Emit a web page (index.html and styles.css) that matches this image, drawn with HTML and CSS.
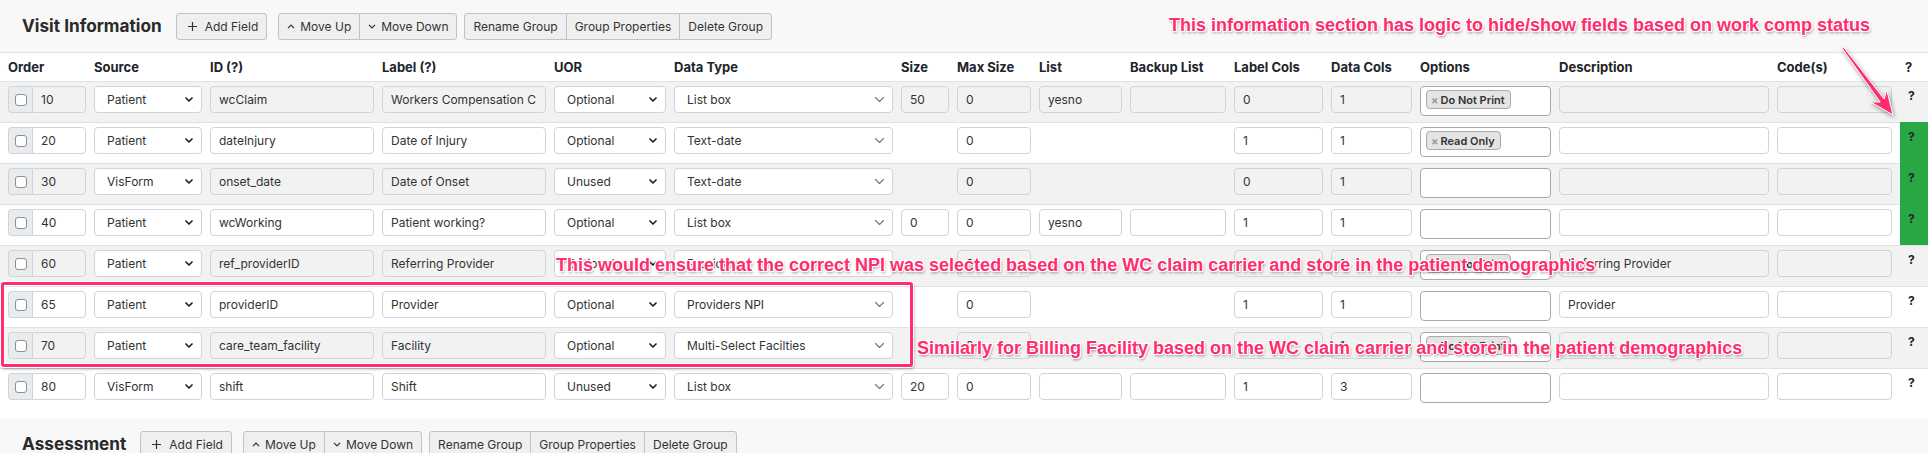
FILE: index.html
```html
<!DOCTYPE html>
<html lang="en">
<head>
<meta charset="utf-8">
<title>Layout Editor</title>
<link rel="stylesheet" href="styles.css">
</head>
<body>
<section class="group">
  <div class="group-head">
    <h2 class="group-title">Visit Information</h2>
    <button class="btn add"><svg class="ico" width="9" height="9" viewBox="0 0 9 9"><path d="M4.5 0v9M0 4.5h9" stroke="#333" stroke-width="1.2" fill="none"/></svg>Add Field</button>
    <div class="btn-group g1">
      <button class="btn"><svg class="ico" width="8" height="5" viewBox="0 0 8 5"><path d="M1 4.2l3-3 3 3" stroke="#333" stroke-width="1.2" fill="none"/></svg>Move Up</button>
      <button class="btn"><svg class="ico" width="8" height="5" viewBox="0 0 8 5"><path d="M1 .8l3 3 3-3" stroke="#333" stroke-width="1.2" fill="none"/></svg>Move Down</button>
    </div>
    <div class="btn-group g2">
      <button class="btn">Rename Group</button>
      <button class="btn">Group Properties</button>
      <button class="btn">Delete Group</button>
    </div>
  </div>
  <table class="fields">
    <colgroup>
      <col style="width:94px"><col style="width:116px"><col style="width:172px"><col style="width:172px"><col style="width:120px"><col style="width:227px"><col style="width:56px"><col style="width:82px"><col style="width:91px"><col style="width:104px"><col style="width:97px"><col style="width:89px"><col style="width:139px"><col style="width:218px"><col style="width:123px"><col style="width:28px">
    </colgroup>
    <thead>
      <tr><th>Order</th><th>Source</th><th>ID (?)</th><th>Label (?)</th><th>UOR</th><th>Data Type</th><th>Size</th><th>Max Size</th><th>List</th><th>Backup List</th><th>Label Cols</th><th>Data Cols</th><th>Options</th><th>Description</th><th>Code(s)</th><th>?</th></tr>
    </thead>
    <tbody>
      <tr class="odd">
        <td><div class="ord"><span class="chk"><input type="checkbox" class="cb"></span><input class="inp ro" value="10" readonly></div></td>
        <td><div class="sel"><span>Patient</span><svg class="chev" width="8" height="5" viewBox="0 0 8 5"><path d="M1 1l3 3 3-3"/></svg></div></td>
        <td><input class="inp ro" value="wcClaim" readonly></td>
        <td><input class="inp ro" value="Workers Compensation C" readonly></td>
        <td><div class="sel"><span>Optional</span><svg class="chev" width="8" height="5" viewBox="0 0 8 5"><path d="M1 1l3 3 3-3"/></svg></div></td>
        <td><div class="sel"><span>List box</span><svg class="chev thin" width="9" height="5" viewBox="0 0 9 5"><path d="M.5.5l4 4 4-4"/></svg></div></td>
        <td><input class="inp ro" value="50" readonly></td>
        <td><input class="inp ro" value="0" readonly></td>
        <td><input class="inp ro" value="yesno" readonly></td>
        <td><input class="inp ro" value="" readonly></td>
        <td><input class="inp ro" value="0" readonly></td>
        <td><input class="inp ro" value="1" readonly></td>
        <td><div class="opts"><span class="tag"><span class="x">×</span>Do Not Print</span></div></td>
        <td><input class="inp ro" value="" readonly></td>
        <td><input class="inp ro" value="" readonly></td>
        <td class="q">?</td>
      </tr>
      <tr>
        <td><div class="ord"><span class="chk"><input type="checkbox" class="cb"></span><input class="inp" value="20"></div></td>
        <td><div class="sel"><span>Patient</span><svg class="chev" width="8" height="5" viewBox="0 0 8 5"><path d="M1 1l3 3 3-3"/></svg></div></td>
        <td><input class="inp" value="dateInjury"></td>
        <td><input class="inp" value="Date of Injury"></td>
        <td><div class="sel"><span>Optional</span><svg class="chev" width="8" height="5" viewBox="0 0 8 5"><path d="M1 1l3 3 3-3"/></svg></div></td>
        <td><div class="sel"><span>Text-date</span><svg class="chev thin" width="9" height="5" viewBox="0 0 9 5"><path d="M.5.5l4 4 4-4"/></svg></div></td>
        <td></td>
        <td><input class="inp" value="0"></td>
        <td></td>
        <td></td>
        <td><input class="inp" value="1"></td>
        <td><input class="inp" value="1"></td>
        <td><div class="opts"><span class="tag"><span class="x">×</span>Read Only</span></div></td>
        <td><input class="inp" value=""></td>
        <td><input class="inp" value=""></td>
        <td class="q ok">?</td>
      </tr>
      <tr class="odd">
        <td><div class="ord"><span class="chk"><input type="checkbox" class="cb"></span><input class="inp ro" value="30" readonly></div></td>
        <td><div class="sel"><span>VisForm</span><svg class="chev" width="8" height="5" viewBox="0 0 8 5"><path d="M1 1l3 3 3-3"/></svg></div></td>
        <td><input class="inp ro" value="onset_date" readonly></td>
        <td><input class="inp ro" value="Date of Onset" readonly></td>
        <td><div class="sel"><span>Unused</span><svg class="chev" width="8" height="5" viewBox="0 0 8 5"><path d="M1 1l3 3 3-3"/></svg></div></td>
        <td><div class="sel"><span>Text-date</span><svg class="chev thin" width="9" height="5" viewBox="0 0 9 5"><path d="M.5.5l4 4 4-4"/></svg></div></td>
        <td></td>
        <td><input class="inp ro" value="0" readonly></td>
        <td></td>
        <td></td>
        <td><input class="inp ro" value="0" readonly></td>
        <td><input class="inp ro" value="1" readonly></td>
        <td><div class="opts"></div></td>
        <td><input class="inp ro" value="" readonly></td>
        <td><input class="inp ro" value="" readonly></td>
        <td class="q ok">?</td>
      </tr>
      <tr>
        <td><div class="ord"><span class="chk"><input type="checkbox" class="cb"></span><input class="inp" value="40"></div></td>
        <td><div class="sel"><span>Patient</span><svg class="chev" width="8" height="5" viewBox="0 0 8 5"><path d="M1 1l3 3 3-3"/></svg></div></td>
        <td><input class="inp" value="wcWorking"></td>
        <td><input class="inp" value="Patient working?"></td>
        <td><div class="sel"><span>Optional</span><svg class="chev" width="8" height="5" viewBox="0 0 8 5"><path d="M1 1l3 3 3-3"/></svg></div></td>
        <td><div class="sel"><span>List box</span><svg class="chev thin" width="9" height="5" viewBox="0 0 9 5"><path d="M.5.5l4 4 4-4"/></svg></div></td>
        <td><input class="inp" value="0"></td>
        <td><input class="inp" value="0"></td>
        <td><input class="inp" value="yesno"></td>
        <td><input class="inp" value=""></td>
        <td><input class="inp" value="1"></td>
        <td><input class="inp" value="1"></td>
        <td><div class="opts"></div></td>
        <td><input class="inp" value=""></td>
        <td><input class="inp" value=""></td>
        <td class="q ok">?</td>
      </tr>
      <tr class="odd">
        <td><div class="ord"><span class="chk"><input type="checkbox" class="cb"></span><input class="inp ro" value="60" readonly></div></td>
        <td><div class="sel"><span>Patient</span><svg class="chev" width="8" height="5" viewBox="0 0 8 5"><path d="M1 1l3 3 3-3"/></svg></div></td>
        <td><input class="inp ro" value="ref_providerID" readonly></td>
        <td><input class="inp ro" value="Referring Provider" readonly></td>
        <td><div class="sel"><span>Optional</span><svg class="chev" width="8" height="5" viewBox="0 0 8 5"><path d="M1 1l3 3 3-3"/></svg></div></td>
        <td><div class="sel"><span>Providers</span><svg class="chev thin" width="9" height="5" viewBox="0 0 9 5"><path d="M.5.5l4 4 4-4"/></svg></div></td>
        <td></td>
        <td><input class="inp ro" value="0" readonly></td>
        <td></td>
        <td></td>
        <td><input class="inp ro" value="1" readonly></td>
        <td><input class="inp ro" value="1" readonly></td>
        <td><div class="opts"><span class="tag"><span class="x">×</span>Do Not Print</span></div></td>
        <td><input class="inp ro" value="Referring Provider" readonly></td>
        <td><input class="inp ro" value="" readonly></td>
        <td class="q">?</td>
      </tr>
      <tr>
        <td><div class="ord"><span class="chk"><input type="checkbox" class="cb"></span><input class="inp" value="65"></div></td>
        <td><div class="sel"><span>Patient</span><svg class="chev" width="8" height="5" viewBox="0 0 8 5"><path d="M1 1l3 3 3-3"/></svg></div></td>
        <td><input class="inp" value="providerID"></td>
        <td><input class="inp" value="Provider"></td>
        <td><div class="sel"><span>Optional</span><svg class="chev" width="8" height="5" viewBox="0 0 8 5"><path d="M1 1l3 3 3-3"/></svg></div></td>
        <td><div class="sel"><span>Providers NPI</span><svg class="chev thin" width="9" height="5" viewBox="0 0 9 5"><path d="M.5.5l4 4 4-4"/></svg></div></td>
        <td></td>
        <td><input class="inp" value="0"></td>
        <td></td>
        <td></td>
        <td><input class="inp" value="1"></td>
        <td><input class="inp" value="1"></td>
        <td><div class="opts"></div></td>
        <td><input class="inp" value="Provider"></td>
        <td><input class="inp" value=""></td>
        <td class="q">?</td>
      </tr>
      <tr class="odd">
        <td><div class="ord"><span class="chk"><input type="checkbox" class="cb"></span><input class="inp ro" value="70" readonly></div></td>
        <td><div class="sel"><span>Patient</span><svg class="chev" width="8" height="5" viewBox="0 0 8 5"><path d="M1 1l3 3 3-3"/></svg></div></td>
        <td><input class="inp ro" value="care_team_facility" readonly></td>
        <td><input class="inp ro" value="Facility" readonly></td>
        <td><div class="sel"><span>Optional</span><svg class="chev" width="8" height="5" viewBox="0 0 8 5"><path d="M1 1l3 3 3-3"/></svg></div></td>
        <td><div class="sel"><span>Multi-Select Facilties</span><svg class="chev thin" width="9" height="5" viewBox="0 0 9 5"><path d="M.5.5l4 4 4-4"/></svg></div></td>
        <td></td>
        <td><input class="inp ro" value="0" readonly></td>
        <td></td>
        <td></td>
        <td><input class="inp ro" value="1" readonly></td>
        <td><input class="inp ro" value="1" readonly></td>
        <td><div class="opts"><span class="tag"><span class="x">×</span>Do Not Print</span></div></td>
        <td><input class="inp ro" value="" readonly></td>
        <td><input class="inp ro" value="" readonly></td>
        <td class="q">?</td>
      </tr>
      <tr>
        <td><div class="ord"><span class="chk"><input type="checkbox" class="cb"></span><input class="inp" value="80"></div></td>
        <td><div class="sel"><span>VisForm</span><svg class="chev" width="8" height="5" viewBox="0 0 8 5"><path d="M1 1l3 3 3-3"/></svg></div></td>
        <td><input class="inp" value="shift"></td>
        <td><input class="inp" value="Shift"></td>
        <td><div class="sel"><span>Unused</span><svg class="chev" width="8" height="5" viewBox="0 0 8 5"><path d="M1 1l3 3 3-3"/></svg></div></td>
        <td><div class="sel"><span>List box</span><svg class="chev thin" width="9" height="5" viewBox="0 0 9 5"><path d="M.5.5l4 4 4-4"/></svg></div></td>
        <td><input class="inp" value="20"></td>
        <td><input class="inp" value="0"></td>
        <td><input class="inp" value=""></td>
        <td><input class="inp" value=""></td>
        <td><input class="inp" value="1"></td>
        <td><input class="inp" value="3"></td>
        <td><div class="opts"></div></td>
        <td><input class="inp" value=""></td>
        <td><input class="inp" value=""></td>
        <td class="q">?</td>
      </tr>
    </tbody>
  </table>
</section>

<section class="group next">
  <div class="group-head">
    <h2 class="group-title">Assessment</h2>
    <button class="btn add"><svg class="ico" width="9" height="9" viewBox="0 0 9 9"><path d="M4.5 0v9M0 4.5h9" stroke="#333" stroke-width="1.2" fill="none"/></svg>Add Field</button>
    <div class="btn-group g1">
      <button class="btn"><svg class="ico" width="8" height="5" viewBox="0 0 8 5"><path d="M1 4.2l3-3 3 3" stroke="#333" stroke-width="1.2" fill="none"/></svg>Move Up</button>
      <button class="btn"><svg class="ico" width="8" height="5" viewBox="0 0 8 5"><path d="M1 .8l3 3 3-3" stroke="#333" stroke-width="1.2" fill="none"/></svg>Move Down</button>
    </div>
    <div class="btn-group g2">
      <button class="btn">Rename Group</button>
      <button class="btn">Group Properties</button>
      <button class="btn">Delete Group</button>
    </div>
  </div>
</section>

<div class="annot a1">This information section has logic to hide/show fields based on work comp status</div>
<div class="annot a2">This would ensure that the correct NPI was selected based on the WC claim carrier and store in the patient demographics</div>
<div class="annot a3">Similarly for Billing Facility based on the WC claim carrier and store in the patient demographics</div>
<div class="hl-box"></div>
<svg class="arrow" width="1928" height="453" viewBox="0 0 1928 453">
  <polygon points="1842.2,48.6 1880.2,102.1 1870.6,101.8 1893,115 1886.7,89.8 1884.2,99.1 1843.8,47.4"/>
</svg>
</body>
</html>
```
FILE: styles.css
```css
* { box-sizing: border-box; }

html, body {
  margin: 0;
  padding: 0;
  overflow: hidden;
  background: #fff;
}

body {
  width: 1928px;
  height: 453px;
  position: relative;
  font-family: Inter, "Noto Sans", sans-serif;
  font-size: 12px;
  color: #212529;
}

/* ---- group header band ---- */
.group-head {
  height: 53px;
  background: #f8f8f8;
  border-bottom: 1px solid #e2e4e7;
  display: flex;
  align-items: center;
  padding-left: 22px;
}

.group-title {
  margin: 0 14px 0 0;
  font-size: 17.2px;
  line-height: 22px;
  font-weight: 700;
  color: #2a2a2a;
}

.btn {
  height: 27px;
  padding: 0 8px;
  border: 1px solid #c2c2c2;
  border-radius: 3px;
  background: #efefef;
  font-family: Inter, "Noto Sans", sans-serif;
  font-size: 12px;
  color: #333;
  display: inline-flex;
  align-items: center;
  gap: 5px;
  white-space: nowrap;
}

.btn.add {
  padding: 0 8px 0 11px;
  gap: 8px;
}

.btn-group { display: flex; }
.btn-group.g1 { margin-left: 11px; }
.btn-group.g2 { margin-left: 7px; }
.btn-group .btn { border-radius: 0; }
.btn-group .btn + .btn { margin-left: -1px; }
.btn-group .btn:first-child { border-radius: 3px 0 0 3px; }
.btn-group .btn:last-child { border-radius: 0 3px 3px 0; }

.ico { flex: none; }

.next { margin-top: 9px; }

/* ---- fields table ---- */
.fields {
  width: 1928px;
  border-collapse: separate;
  border-spacing: 0;
  table-layout: fixed;
}

.fields th {
  height: 28px;
  padding: 0 8px 0 0;
  text-align: left;
  vertical-align: middle;
  font-size: 13px;
  font-weight: 700;
  color: #212529;
  white-space: nowrap;
}

.fields tbody tr { height: 41px; }

.fields td {
  padding: 4px 8px 0 0;
  vertical-align: top;
  border-top: 1px solid #dee2e6;
}

.fields tr > :first-child { padding-left: 8px; }
.fields tr > :last-child { padding-right: 0; }
.fields th:last-child { padding-left: 5px; }

.fields tr.odd td { background: #f2f2f2; }

.fields td.q {
  padding: 6px 0 0 8px;
  font-size: 12px;
  font-weight: 700;
  color: #212529;
}

.fields tr td.q.ok {
  background: #28a745;
  border-top-color: #28a745;
}

/* ---- inputs ---- */
.inp {
  display: block;
  width: 100%;
  height: 27px;
  margin: 0;
  padding: 0 8px;
  border: 1px solid #d0d4d9;
  border-radius: 4px;
  background: #fff;
  font-family: Inter, "Noto Sans", sans-serif;
  font-size: 12px;
  color: #333;
  outline: none;
}

.inp.ro { background: #f2f2f2; }

.ord {
  display: flex;
  height: 27px;
}

.chk {
  flex: none;
  width: 24px;
  display: flex;
  align-items: center;
  justify-content: center;
  background: #e9ecef;
  border: 1px solid #d0d4d9;
  border-right: none;
  border-radius: 4px 0 0 4px;
}

.cb {
  appearance: none;
  -webkit-appearance: none;
  width: 12px;
  height: 12px;
  margin: 0;
  border: 1px solid #8e8e8e;
  border-radius: 3px;
  background: #fff;
}

.ord .inp {
  flex: 1;
  min-width: 0;
  border-radius: 0 4px 4px 0;
}

.sel {
  display: flex;
  align-items: center;
  justify-content: space-between;
  height: 27px;
  padding: 0 8px 0 12px;
  border: 1px solid #d0d4d9;
  border-radius: 4px;
  background: #fff;
  color: #333;
  white-space: nowrap;
  overflow: hidden;
}

.chev { flex: none; }
.chev path {
  fill: none;
  stroke: #222;
  stroke-width: 1.7;
  stroke-linecap: round;
  stroke-linejoin: round;
}
.chev.thin path {
  stroke: #777;
  stroke-width: 1.1;
}

.opts {
  height: 30px;
  padding: 3px 5px;
  border: 1px solid #a9a9a9;
  border-radius: 4px;
  background: #fff;
}

.tag {
  display: inline-flex;
  align-items: center;
  height: 19px;
  padding: 0 5px 0 4px;
  border: 1px solid #aaa;
  border-radius: 4px;
  background: #e4e4e4;
  font-size: 11px;
  font-weight: 600;
  color: #333;
  white-space: nowrap;
}

.tag .x {
  color: #999;
  font-weight: 700;
  margin-right: 2px;
}

/* ---- annotations (overlay) ---- */
.annot {
  position: absolute;
  font-family: "Liberation Sans", Arial, sans-serif;
  font-weight: 700;
  font-size: 18px;
  line-height: 18px;
  color: #ff2d6e;
  white-space: nowrap;
  text-shadow:
    -1px -1px 0 #fff, 1px -1px 0 #fff, -1px 1px 0 #fff, 1px 1px 0 #fff,
    0 -1px 0 #fff, 0 1px 0 #fff, -1px 0 0 #fff, 1px 0 0 #fff,
    1px 2px 3px rgba(0, 0, 0, 0.45);
}

.a1 { left: 1169px; top: 16px; }
.a2 { left: 556px; top: 256px; }
.a3 { left: 917px; top: 339px; }

.hl-box {
  position: absolute;
  left: 1px;
  top: 282px;
  width: 912px;
  height: 85px;
  border: 3px solid #ff2d6e;
  border-radius: 3px;
  box-shadow: 0 0 0 1px #fff, inset 0 0 0 1px #fff, 1px 2px 3px rgba(0, 0, 0, 0.35);
}

.arrow {
  position: absolute;
  left: 0;
  top: 0;
  pointer-events: none;
}

.arrow polygon {
  fill: #ff2d6e;
  stroke: #fff;
  stroke-width: 1;
  stroke-linejoin: round;
  filter: drop-shadow(1px 2px 2px rgba(0, 0, 0, 0.4));
}
```
